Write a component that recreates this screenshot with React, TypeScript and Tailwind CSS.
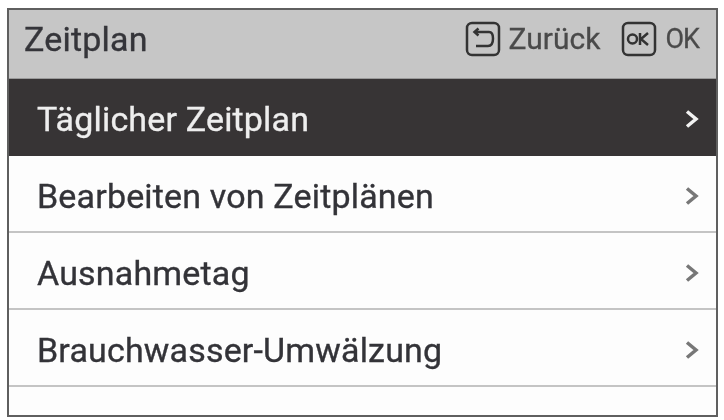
export default function App() {
  const rows = [
    { label: "Täglicher Zeitplan", active: true },
    { label: "Bearbeiten von Zeitplänen" },
    { label: "Ausnahmetag" },
    { label: "Brauchwasser-Umwälzung" },
  ];
  return (
    <div className="w-[724px] h-[420px] bg-white pt-[8px] pl-[7px] font-['Roboto',sans-serif] overflow-hidden">
      <div className="w-[711px] h-[409px] border-2 border-[#5f5f5f] flex flex-col bg-[#fdfdfd]">
        <div className="h-[69px] bg-[#c6c6c6] flex items-center pl-[15px] pr-[17px] pb-[10px] text-[#3a3a3a] shrink-0 border-b border-[#9a9a9a]">
          <span className="text-[34px] tracking-[0.2px] [-webkit-text-stroke:0.35px_currentColor] leading-none flex-1 text-[#35353a] blur-[0.7px]">Zeitplan</span>
          <svg width="36" height="36" viewBox="0 0 36 36" fill="none" stroke="#333" strokeWidth="2.5" className="blur-[0.4px]">
            <rect x="2" y="2" width="32" height="32" rx="5" />
            <path d="M10 11 H24 Q28 11 28 17.5 Q28 25 23 25 H11" strokeWidth="2.5" />
            <path d="M13.5 7.5 L9.5 11 L13.5 14.5" strokeWidth="2.5" />
          </svg>
          <span className="text-[30px] [-webkit-text-stroke:0.3px_currentColor] leading-none ml-[8px] text-[#4a4a4a] blur-[0.7px]">Zurück</span>
          <svg width="36" height="36" viewBox="0 0 36 36" fill="none" stroke="#333" strokeWidth="2.5" className="ml-[21px] blur-[0.4px]">
            <rect x="2" y="2" width="32" height="32" rx="5" />
            <circle cx="11.5" cy="18" r="4.5" strokeWidth="2.5" />
            <path d="M19 12 V24 M27 12 L20 18 L27 24" strokeWidth="2.5" />
          </svg>
          <span className="text-[27px] [-webkit-text-stroke:0.3px_currentColor] leading-none ml-[8px] tracking-[-1px] text-[#4a4a4a] blur-[0.7px]">OK</span>
        </div>
        {rows.map((r) => (
          <div
            key={r.label}
            className={`h-[77px] shrink-0 flex items-center pl-[28px] pr-[17px] pt-[4px] border-b-2 ${
              r.active ? "bg-[#373435] border-[#373435] text-[#eeeeee] h-[75px]" : "border-[#c4c4c4] text-[#333338]"
            }`}
          >
            <span className="flex-1 text-[34px] tracking-[0.17px] [-webkit-text-stroke:0.35px_currentColor] leading-none blur-[0.7px]">{r.label}</span>
            <svg width="14" height="20" viewBox="0 0 14 20" fill="none" stroke={r.active ? "#f2f2f2" : "#777"} strokeWidth="3.5" className="blur-[0.5px]">
              <path d="M2 2.5 L11 10 L2 17.5" />
            </svg>
          </div>
        ))}
      </div>
    </div>
  );
}
